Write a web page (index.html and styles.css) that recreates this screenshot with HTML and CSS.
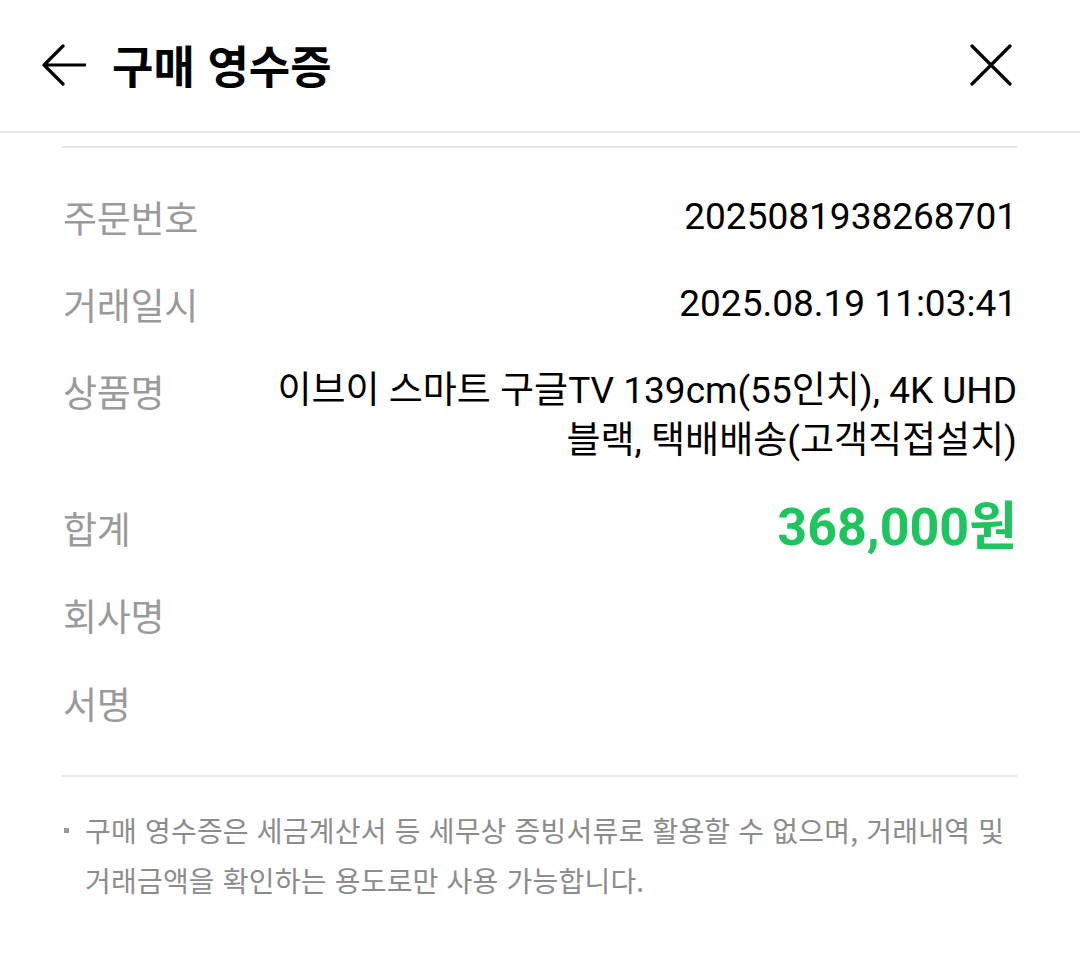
FILE: index.html
```html
<!DOCTYPE html>
<html lang="ko">
<head>
<meta charset="utf-8">
<title>구매 영수증</title>
<link rel="stylesheet" href="styles.css">
</head>
<body>
<header class="topbar">
  <button class="icon-btn back" aria-label="뒤로">
    <svg width="46" height="46" viewBox="0 0 46 46"><path d="M23 4 L4 23 L23 42 M4 23 H45" fill="none" stroke="#000" stroke-width="3.2" stroke-linecap="round" stroke-linejoin="round"/></svg>
  </button>
  <h1 class="title">구매 영수증</h1>
  <button class="icon-btn close" aria-label="닫기">
    <svg width="42" height="42" viewBox="0 0 42 42"><path d="M2 2 L40 40 M40 2 L2 40" fill="none" stroke="#000" stroke-width="3.2" stroke-linecap="round"/></svg>
  </button>
</header>
<main class="content">
  <div class="rows">
    <div class="row"><span class="label">주문번호</span><span class="value">2025081938268701</span></div>
    <div class="row"><span class="label">거래일시</span><span class="value">2025.08.19 11:03:41</span></div>
    <div class="row product"><span class="label">상품명</span><span class="value">이브이 스마트 구글TV 139cm(55인치), 4K UHD<br>블랙, 택배배송(고객직접설치)</span></div>
    <div class="row total"><span class="label">합계</span><span class="value amount">368,000원</span></div>
    <div class="row blank"><span class="label">회사명</span><span class="value"></span></div>
    <div class="row blank"><span class="label">서명</span><span class="value"></span></div>
  </div>
  <p class="note"><span class="bullet"></span><span>구매 영수증은 세금계산서 등 세무상 증빙서류로 활용할 수 없으며, 거래내역 및<br>거래금액을 확인하는 용도로만 사용 가능합니다.</span></p>
</main>
</body>
</html>
```

FILE: styles.css
```css
html, body {
  margin: 0;
  padding: 0;
  background: #fff;
}
body {
  font-family: Roboto, "Noto Sans CJK KR", sans-serif;
  color: #000;
  width: 1080px;
}
.topbar {
  height: 133px;
  border-bottom: 2px solid #e6e6e6;
  display: flex;
  align-items: center;
  padding: 0 40px 0 40px;
  box-sizing: border-box;
}
.icon-btn {
  background: none;
  border: 0;
  padding: 0;
  display: flex;
  align-items: center;
  justify-content: center;
  cursor: pointer;
}
.back {
  margin-top: -2px;
}
.title {
  margin: 0 0 0 26px;
  font-family: "Noto Sans CJK KR", sans-serif;
  font-weight: 700;
  font-size: 45px;
  letter-spacing: 0;
  flex: 1;
  line-height: 1;
  margin-top: -2px;
}
.close {
  margin-right: 28px;
  margin-top: -2px;
}
.content {
  padding: 13px 63px 0 62px;
}
.rows {
  border-top: 2px solid #e6e6e6;
  border-bottom: 2px solid #e6e6e6;
  padding: 44px 0 46px;
  display: flex;
  flex-direction: column;
  gap: 37px;
}
.row {
  display: flex;
  justify-content: space-between;
  align-items: flex-start;
  line-height: 50px;
  min-height: 50px;
}
.blank {
  min-height: 51px;
}
.label {
  font-family: "Noto Sans CJK KR", sans-serif;
  font-size: 37px;
  color: #9a9a9a;
  letter-spacing: -0.3px;
  flex: none;
  padding-left: 1px;
}
.value {
  font-family: Roboto, "Noto Sans CJK KR", sans-serif;
  font-size: 37px;
  font-weight: 400;
  text-align: right;
  letter-spacing: 0;
  color: #000;
}
.product .value {
  line-height: 50px;
}
.total .value.amount {
  color: #1ec45e;
  font-size: 52px;
  font-weight: 700;
  letter-spacing: 0;
  line-height: 50px;
}
.note {
  margin: 28px 0 0;
  display: flex;
  gap: 16px;
  font-family: "Noto Sans CJK KR", sans-serif;
  font-size: 28px;
  line-height: 50px;
  color: #8c8c8c;
  letter-spacing: 0.2px;
}
.bullet {
  flex: none;
  width: 5px;
  height: 5px;
  background: #999;
  margin-top: 23px;
  margin-left: 2px;
}
```
